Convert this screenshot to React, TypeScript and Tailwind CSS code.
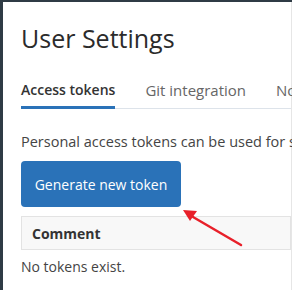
import React from "react";

const App = () => {
  return (
    <div className="w-[292px] h-[290px] overflow-hidden bg-white border-t-2 border-l-[3px] border-[#2f3b45] font-['Open_Sans',sans-serif] text-[#333]">
      <div className="relative h-full border-r border-[#e6e6e6] pl-[18px]">
        <h1 className="pt-[19px] text-[25px] leading-[34px] text-[#2b2b2b]">User Settings</h1>

        <div className="mt-[25px] flex whitespace-nowrap border-b border-[#dde3ea]">
          <div className="mr-[30px] pb-[6px] border-b-[3px] border-[#2a72b8] -mb-px text-[14px] leading-[20px] font-semibold text-[#333]">
            Access tokens
          </div>
          <div className="mr-[30px] pb-[6px] text-[15px] leading-[20px] text-[#666]">Git integration</div>
          <div className="pb-[6px] text-[15px] leading-[20px] text-[#666]">Notifications</div>
        </div>

        <p className="mt-[23px] whitespace-nowrap text-[14.5px] leading-[20px] text-[#444]">
          Personal access tokens can be used for scripts and integrations.
        </p>

        <button className="mt-[9px] h-[46px] w-[160px] rounded-[4px] bg-[#2a72b8] text-[14px] text-white">
          Generate new token
        </button>

        <div className="mt-[9px] h-[34px] flex items-center border border-[#e3e3e3] bg-[#f8f8f8] pl-[10px] text-[14px] font-bold text-[#333]">
          Comment
        </div>

        <p className="mt-[7px] text-[14px] leading-[20px] text-[#444]">No tokens exist.</p>

        <svg className="absolute left-0 top-0" width="292" height="290" viewBox="0 0 292 290">
          <line x1="238" y1="243" x2="190" y2="215" stroke="#e8202a" strokeWidth="2.5" strokeLinecap="round" />
          <polygon points="180,208 194,209 187,219" fill="#e8202a" />
        </svg>
      </div>
    </div>
  );
};

export default App;
